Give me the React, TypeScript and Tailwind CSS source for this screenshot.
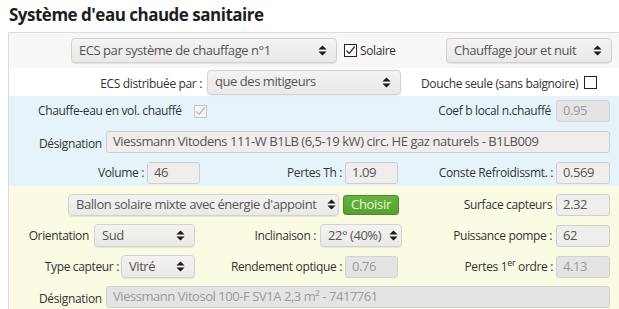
import React from "react";

type SelectProps = {
	text: string;
	className: string;
};

const SortArrows = () => (
	<svg width="9" height="11" viewBox="0 0 9 11" className="shrink-0">
		<path d="M4.5 0.5 L8.6 4.6 H0.4 Z M0.4 6.4 H8.6 L4.5 10.5 Z" fill="#1a1a1a" />
	</svg>
);

const Select: React.FC<SelectProps> = ({ text, className }) => (
	<div
		className={`flex items-center justify-between gap-[2px] rounded-[4px] border border-[#d3d2d0] bg-gradient-to-b from-[#f4f3f1] to-[#eae9e7] pl-[7px] text-[13px] tracking-[-0.45px] text-[#555] shadow-[0_1px_1px_rgba(0,0,0,0.08)] ${className}`}
	>
		<span className="whitespace-nowrap">{text}</span>
		<SortArrows />
	</div>
);

type FieldProps = {
	value: string;
	disabled?: boolean;
	className?: string;
};

const Field: React.FC<FieldProps> = ({ value, disabled, className = "w-[54px]" }) => (
	<div
		className={`flex h-[22px] items-center rounded-[3px] border px-[6px] text-[13px] tracking-[-0.45px] ${
			disabled
				? "border-[#d3d3d3] bg-[#e4e4e4] text-[#9a9a9a]"
				: "border-[#cfcfcf] bg-[#efeeec] text-[#555]"
		} ${className}`}
	>
		{value}
	</div>
);

const Check = ({ checked, disabled }: { checked?: boolean; disabled?: boolean }) => (
	<div
		className={`flex h-[13px] w-[13px] shrink-0 items-center justify-center border ${
			disabled ? "border-[#c8c8c8] bg-[#f4f4f4]" : "border-[#222] bg-white"
		}`}
	>
		{checked && (
			<svg width="11" height="11" viewBox="0 0 11 11">
				<path
					d="M1.5 5.5 L4.2 8.3 L9.8 1.5"
					fill="none"
					stroke={disabled ? "#b8b8b8" : "#222"}
					strokeWidth="1.2"
				/>
			</svg>
		)}
	</div>
);

const Label = ({ children }: { children: React.ReactNode }) => (
	<span className="whitespace-nowrap text-[12px] tracking-[-0.35px] text-[#333]">{children}</span>
);

export default function App() {
	return (
		<div className="h-[309px] w-[619px] overflow-hidden bg-white font-['Open_Sans',sans-serif]">
			<div className="flex h-[32px] items-center pl-[9px] pb-[2px]">
				<h1 className="text-[17px] font-bold tracking-[-0.5px] text-[#1e1e1e]">Système d'eau chaude sanitaire</h1>
			</div>

			<div className="ml-[8px] border-l border-t border-[#dcdcdc]">
				{/* ligne 1 */}
				<div className="flex h-[35px] items-center bg-[#f7f7f7]">
					<div className="flex w-[437px] items-center pl-[62px]">
						<Select text="ECS par système de chauffage n°1" className="h-[25px] w-[266px] pr-[9px]" />
						<div className="ml-[7px]">
							<Check checked />
						</div>
						<span className="ml-[3px] text-[12px] tracking-[-0.35px] text-[#333]">Solaire</span>
					</div>
					<Select text="Chauffage jour et nuit" className="h-[25px] w-[166px] pr-[9px]" />
				</div>

				{/* ligne 2 */}
				<div className="flex h-[28px] items-center bg-white">
					<div className="w-[193px] text-right">
						<Label>ECS distribuée par :</Label>
					</div>
					<Select text="que des mitigeurs" className="ml-[5px] h-[25px] w-[194px] pr-[9px]" />
					<div className="ml-[20px]">
						<Label>Douche seule (sans baignoire)</Label>
					</div>
					<div className="ml-[6px]">
						<Check />
					</div>
				</div>

				{/* chauffe-eau */}
				<div className="flex flex-col gap-[9px] bg-[#e7f3fb] pt-[4px] pb-[2px]">
					<div className="flex h-[22px] items-center">
						<div className="flex items-center pl-[29px]">
							<Label>Chauffe-eau en vol. chauffé</Label>
							<div className="ml-[12px]">
								<Check checked disabled />
							</div>
						</div>
						<div className="flex flex-1 items-center justify-end gap-[5px] pr-[9px]">
							<Label>Coef b local n.chauffé</Label>
							<Field value="0.95" disabled />
						</div>
					</div>
					<div className="flex h-[22px] items-center">
						<div className="w-[97px] pl-[30px]">
							<Label>Désignation</Label>
						</div>
						<Field
							value="Viessmann Vitodens 111-W B1LB (6,5-19 kW) circ. HE gaz naturels - B1LB009"
							className="mr-[9px] flex-1 whitespace-nowrap"
						/>
					</div>
					<div className="flex h-[22px] items-center">
						<div className="flex w-[191px] items-center justify-end gap-[3px]">
							<Label>Volume :</Label>
							<Field value="46" className="w-[53px]" />
						</div>
						<div className="flex w-[198px] items-center justify-end gap-[3px]">
							<Label>Pertes Th :</Label>
							<Field value="1.09" className="w-[53px]" />
						</div>
						<div className="flex flex-1 items-center justify-end gap-[3px] pr-[9px]">
							<Label>Conste Refroidissmt. :</Label>
							<Field value="0.569" />
						</div>
					</div>
				</div>

				{/* solaire */}
				<div className="flex flex-col gap-[8px] bg-[#fbfbe3] pt-[7px] pb-[4px]">
					<div className="flex h-[23px] items-center">
						<div className="flex w-[390px] items-center pl-[59px]">
							<Select text="Ballon solaire mixte avec énergie d'appoint" className="h-[22px] w-[271px] pr-[2px]" />
							<button className="ml-[4px] flex h-[20px] w-[56px] items-center justify-center rounded-[3px] border border-[#4c8d2b] bg-gradient-to-b from-[#66b43e] to-[#54a02e] text-[13px] tracking-[-0.3px] text-[#eef7dc]">
								Choisir
							</button>
						</div>
						<div className="flex flex-1 items-center justify-end gap-[4px] pr-[9px]">
							<Label>Surface capteurs</Label>
							<Field value="2.32" />
						</div>
					</div>
					<div className="flex h-[23px] items-center">
						<div className="flex w-[186px] items-center justify-end gap-[5px]">
							<Label>Orientation</Label>
							<Select text="Sud" className="h-[23px] w-[101px] pr-[9px]" />
						</div>
						<div className="flex w-[207px] items-center justify-end gap-[4px]">
							<Label>Inclinaison :</Label>
							<Select text="22° (40%)" className="h-[23px] w-[82px] pr-[3px]" />
						</div>
						<div className="flex flex-1 items-center justify-end gap-[4px] pr-[9px]">
							<Label>Puissance pompe :</Label>
							<Field value="62" />
						</div>
					</div>
					<div className="flex h-[23px] items-center">
						<div className="flex w-[186px] items-center justify-end gap-[2px]">
							<Label>Type capteur :</Label>
							<Select text="Vitré" className="h-[23px] w-[74px] pr-[9px]" />
						</div>
						<div className="flex w-[203px] items-center justify-end gap-[3px]">
							<Label>Rendement optique :</Label>
							<Field value="0.76" disabled className="w-[53px]" />
						</div>
						<div className="flex flex-1 items-center justify-end gap-[3px] pr-[9px]">
							<Label>
								Pertes 1<sup className="text-[9px]">er</sup> ordre :
							</Label>
							<Field value="4.13" disabled />
						</div>
					</div>
					<div className="flex h-[22px] items-center">
						<div className="w-[97px] pl-[30px]">
							<Label>Désignation</Label>
						</div>
						<Field
							value="Viessmann Vitosol 100-F SV1A 2,3 m² - 7417761"
							disabled
							className="mr-[9px] flex-1 whitespace-nowrap"
						/>
					</div>
				</div>
			</div>
		</div>
	);
}
